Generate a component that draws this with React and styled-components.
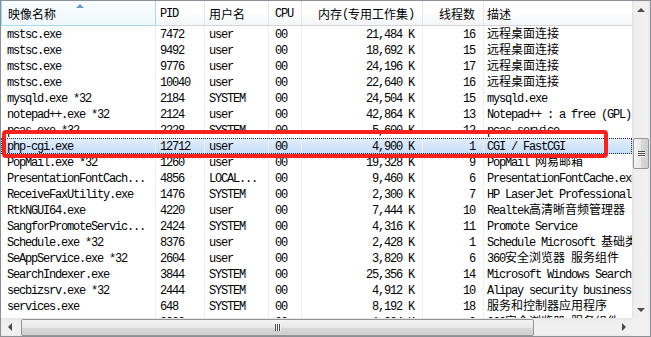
import React from "react";
import styled, { createGlobalStyle } from "styled-components";

const GlobalStyle = createGlobalStyle`
  html, body {
    margin: 0;
    padding: 0;
    background: #ffffff;
  }
  body {
    font-family: "Liberation Mono", "Noto Sans CJK SC", monospace;
    color: #000;
  }
`;

// width includes the 1px divider on the right
const columns = [
  { key: "name", label: "映像名称", w: 155, pad: 7 },
  { key: "pid", label: "PID", w: 49, pad: 5 },
  { key: "user", label: "用户名", w: 64, pad: 5 },
  { key: "cpu", label: "CPU", w: 33, pad: 7 },
  { key: "mem", label: "内存(专用工作集)", w: 121, pad: 8, align: "right" },
  { key: "threads", label: "线程数", w: 61, pad: 8, align: "right" },
  { key: "desc", label: "描述", w: 148, pad: 4, last: true },
];

const gridCols = columns.map((c) => c.w + "px").join(" ");

const rows = [
  ["mstsc.exe", "7472", "user", "00", "21,484 K", "16", "远程桌面连接"],
  ["mstsc.exe", "9492", "user", "00", "18,692 K", "15", "远程桌面连接"],
  ["mstsc.exe", "9776", "user", "00", "24,196 K", "17", "远程桌面连接"],
  ["mstsc.exe", "10040", "user", "00", "22,640 K", "16", "远程桌面连接"],
  ["mysqld.exe *32", "2184", "SYSTEM", "00", "24,504 K", "15", "mysqld.exe"],
  ["notepad++.exe *32", "2124", "user", "00", "42,864 K", "13", "Notepad++ : a free (GPL) source code editor"],
  ["pcas.exe *32", "2228", "SYSTEM", "00", "5,600 K", "12", "pcas service"],
  ["php-cgi.exe", "12712", "user", "00", "4,900 K", "1", "CGI / FastCGI"],
  ["PopMail.exe *32", "1260", "user", "00", "19,328 K", "9", "PopMail 网易邮箱"],
  ["PresentationFontCach...", "4856", "LOCAL...", "00", "9,460 K", "6", "PresentationFontCache.exe"],
  ["ReceiveFaxUtility.exe", "1476", "SYSTEM", "00", "2,300 K", "7", "HP LaserJet Professional M1210"],
  ["RtkNGUI64.exe", "4220", "user", "00", "7,444 K", "10", "Realtek高清晰音频管理器"],
  ["SangforPromoteServic...", "2424", "SYSTEM", "00", "4,316 K", "11", "Promote Service"],
  ["Schedule.exe *32", "8376", "user", "00", "2,428 K", "1", "Schedule Microsoft 基础类应用程序"],
  ["SeAppService.exe *32", "2604", "user", "00", "3,820 K", "6", "360安全浏览器 服务组件"],
  ["SearchIndexer.exe", "3844", "SYSTEM", "00", "25,356 K", "14", "Microsoft Windows Search 索引器"],
  ["secbizsrv.exe *32", "2444", "SYSTEM", "00", "4,912 K", "10", "Alipay security business service"],
  ["services.exe", "648", "SYSTEM", "00", "8,192 K", "18", "服务和控制器应用程序"],
  ["sesvc.exe", "3020", "user", "00", "1,924 K", "9", "360安全浏览器 服务组件"],
];

const SELECTED = 7;

const cjkRun = /([\u2e80-\u9fff\uff00-\uffef]+)/;

function renderText(text) {
  return text.split(cjkRun).map((part, i) =>
    i % 2 === 1 ? <Cjk key={i}>{part}</Cjk> : part
  );
}

export default function App() {
  return (
    <>
      <GlobalStyle />
      <Frame>
        <ListPane>
          <HeaderRow>
            {columns.map((c, i) => (
              <HeadCell
                key={c.key}
                $pad={c.pad}
                $align={c.align}
                $last={c.last}
                $sorted={i === 0}
              >
                {i === 0 && <SortArrow />}
                {renderText(c.label)}
              </HeadCell>
            ))}
          </HeaderRow>
          <Body>
            {rows.map((r, ri) => (
              <Row key={ri} $selected={ri === SELECTED}>
                {columns.map((c, ci) => (
                  <Cell key={c.key} $pad={c.pad} $align={c.align} $last={c.last}>
                    {renderText(r[ci])}
                  </Cell>
                ))}
              </Row>
            ))}
          </Body>
        </ListPane>

        <VScroll>
          <ScrollButton>
            <Arrow $dir="up" />
          </ScrollButton>
          <VTrack>
            <VThumb>
              <VGrip>
                <span />
                <span />
                <span />
              </VGrip>
            </VThumb>
          </VTrack>
          <ScrollButton>
            <Arrow $dir="down" />
          </ScrollButton>
        </VScroll>

        <HScroll>
          <ScrollButton>
            <Arrow $dir="left" />
          </ScrollButton>
          <HTrack>
            <HThumb>
              <HGrip>
                <span />
                <span />
                <span />
              </HGrip>
            </HThumb>
          </HTrack>
          <ScrollButton>
            <Arrow $dir="right" />
          </ScrollButton>
        </HScroll>

        <Corner />

        <Highlight />
      </Frame>
    </>
  );
}

const Frame = styled.div`
  position: relative;
  box-sizing: border-box;
  width: 651px;
  height: 337px;
  border: 1px solid #8b8f96;
  display: grid;
  grid-template-columns: 631px 18px;
  grid-template-rows: 317px 18px;
  background: #fff;
  overflow: hidden;
`;

const ListPane = styled.div`
  display: flex;
  flex-direction: column;
  overflow: hidden;
`;

const HeaderRow = styled.div`
  display: grid;
  grid-template-columns: ${gridCols};
  height: 25px;
  flex-shrink: 0;
  box-sizing: border-box;
  border-bottom: 1px solid #d5d5d5;
  background: linear-gradient(#ffffff, #ffffff 45%, #f4f5f7);
`;

const HeadCell = styled.div`
  position: relative;
  box-sizing: border-box;
  display: flex;
  align-items: center;
  justify-content: ${(p) => (p.$align === "right" ? "flex-end" : "flex-start")};
  padding: ${(p) => (p.$align === "right" ? `1px ${p.$pad}px 0 0` : `1px 0 0 ${p.$pad - 1}px`)};
  font-size: 12px;
  letter-spacing: -1.2px;
  white-space: nowrap;
  overflow: hidden;
  border-right: ${(p) => (p.$last ? "none" : "1px solid #e3e6ea")};
  border-left: ${(p) => (p.$sorted ? "1px solid #a6d8f2" : "none")};
  border-bottom: ${(p) => (p.$sorted ? "1px solid #a6d8f2" : "none")};
  margin-bottom: ${(p) => (p.$sorted ? "-1px" : "0")};
  ${(p) =>
    p.$sorted &&
    `
    border-right-color: #a6d8f2;
    background: linear-gradient(#f9fcfe, #eef8fd);
  `}
`;

const SortArrow = styled.span`
  position: absolute;
  top: 3px;
  left: 74px;
  width: 0;
  height: 0;
  border-left: 4px solid transparent;
  border-right: 4px solid transparent;
  border-bottom: 4px solid #6f9bbd;
`;

const Body = styled.div`
  flex: 1;
  overflow: hidden;
`;

const Row = styled.div`
  display: grid;
  grid-template-columns: ${gridCols};
  height: 16px;
  ${(p) =>
    p.$selected &&
    `
    background: linear-gradient(#e6f0fc, #d3e5fb 50%, #c6ddf8);
    outline: 1px dotted #1c2a44;
    outline-offset: -1px;
  `}
`;

const Cell = styled.div`
  box-sizing: border-box;
  height: 16px;
  line-height: 18px;
  font-size: 12px;
  letter-spacing: -1.2px;
  white-space: nowrap;
  overflow: hidden;
  text-align: ${(p) => p.$align || "left"};
  padding: ${(p) => (p.$align === "right" ? `0 ${p.$pad}px 0 0` : `0 0 0 ${p.$pad - 1}px`)};
  border-right: ${(p) => (p.$last ? "none" : "1px solid #eceff4")};
`;

const Cjk = styled.span`
  font-family: "Noto Sans CJK SC", sans-serif;
  font-size: 12px;
  line-height: 0;
  letter-spacing: 0;
`;

const ScrollButton = styled.div`
  flex: 0 0 17px;
  width: 17px;
  height: 17px;
  display: flex;
  align-items: center;
  justify-content: center;
`;

const Arrow = styled.span`
  width: 0;
  height: 0;
  ${(p) =>
    p.$dir === "up"
      ? `border-left: 4px solid transparent; border-right: 4px solid transparent; border-bottom: 4px solid #4a4a4a;`
      : p.$dir === "down"
      ? `border-left: 4px solid transparent; border-right: 4px solid transparent; border-top: 4px solid #4a4a4a;`
      : p.$dir === "left"
      ? `border-top: 4px solid transparent; border-bottom: 4px solid transparent; border-right: 4px solid #4a4a4a;`
      : `border-top: 4px solid transparent; border-bottom: 4px solid transparent; border-left: 4px solid #4a4a4a;`}
`;

const VScroll = styled.div`
  display: flex;
  flex-direction: column;
  background: linear-gradient(to right, #e3e3e3, #efefef 15%, #f1f1f1 85%, #e8e8e8);
`;

const VTrack = styled.div`
  flex: 1;
  padding-top: 120px;
  display: flex;
  justify-content: center;
`;

const VThumb = styled.div`
  box-sizing: border-box;
  width: 16px;
  height: 31px;
  border: 1px solid #959595;
  border-radius: 2px;
  background: linear-gradient(to right, #f4f4f4, #e8e8e8 50%, #d8d8d8 51%, #cfcfcf);
  display: flex;
  align-items: center;
  justify-content: center;
`;

const VGrip = styled.div`
  display: flex;
  flex-direction: column;
  gap: 1px;
  span {
    display: block;
    width: 7px;
    height: 1px;
    background: #4e4e4e;
    box-shadow: 0 1px 0 #f4f4f4;
  }
`;

const HScroll = styled.div`
  display: flex;
  align-items: center;
  background: linear-gradient(#e3e3e3, #efefef 15%, #f1f1f1 85%, #e8e8e8);
`;

const HTrack = styled.div`
  flex: 1;
  height: 18px;
  padding-left: 3px;
  display: flex;
  align-items: center;
`;

const HThumb = styled.div`
  box-sizing: border-box;
  width: 513px;
  height: 17px;
  border: 1px solid #959595;
  border-radius: 2px;
  background: linear-gradient(#f4f4f4, #e8e8e8 50%, #d8d8d8 51%, #cfcfcf);
  display: flex;
  align-items: center;
  justify-content: center;
`;

const HGrip = styled.div`
  display: flex;
  gap: 1px;
  span {
    display: block;
    width: 1px;
    height: 7px;
    background: #4e4e4e;
    box-shadow: 1px 0 0 #f4f4f4;
  }
`;

const Corner = styled.div`
  background: #f0f0f0;
`;

const Highlight = styled.div`
  position: absolute;
  left: 1px;
  top: 129px;
  width: 606px;
  height: 28px;
  box-sizing: border-box;
  border: 4px solid #f6221b;
  border-radius: 4px;
  pointer-events: none;
`;
